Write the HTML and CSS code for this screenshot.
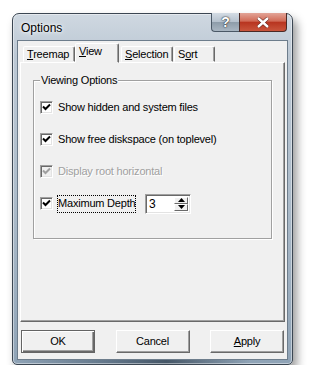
FILE: index.html
```html
<!DOCTYPE html>
<html lang="en">
<head>
  <meta charset="UTF-8" />
  <title>Options</title>
  <link rel="stylesheet" href="styles.css">
</head>
<body>
  <div class="window">
    <div class="titlebar">
      <span class="title">Options</span>
      <div class="caption-btns">
        <div class="cap-help">?</div>
        <div class="cap-close">
          <svg width="14" height="11" viewBox="0 0 14 11">
            <path d="M2 1 L12 10 M12 1 L2 10" stroke="#5a1a12" stroke-width="3.6" fill="none"/>
            <path d="M2 1 L12 10 M12 1 L2 10" stroke="#fff" stroke-width="2.4" fill="none"/>
          </svg>
        </div>
      </div>
    </div>

    <div class="client">
      <div class="tabs">
        <div class="tab tab-treemap"><u>T</u>reemap</div>
        <div class="tab tab-view active"><u>V</u>iew</div>
        <div class="tab tab-selection"><u>S</u>election</div>
        <div class="tab tab-sort">S<u>o</u>rt</div>
      </div>

      <div class="panel">
        <div class="group">
          <span class="legend">Viewing Options</span>
          <div class="rows">
            <div class="row">
              <span class="check"><svg width="9" height="9" viewBox="0 0 9 9"><path d="M1 3.5 L3.5 6 L8 1.5" stroke="#000" stroke-width="2" fill="none"/></svg></span>
              <span class="label">Show hidden and system files</span>
            </div>
            <div class="row">
              <span class="check"><svg width="9" height="9" viewBox="0 0 9 9"><path d="M1 3.5 L3.5 6 L8 1.5" stroke="#000" stroke-width="2" fill="none"/></svg></span>
              <span class="label">Show free diskspace (on toplevel)</span>
            </div>
            <div class="row disabled">
              <span class="check"><svg width="9" height="9" viewBox="0 0 9 9"><path d="M1 3.5 L3.5 6 L8 1.5" stroke="#a0a0a0" stroke-width="2" fill="none"/></svg></span>
              <span class="label">Display root horizontal</span>
            </div>
            <div class="row">
              <span class="check"><svg width="9" height="9" viewBox="0 0 9 9"><path d="M1 3.5 L3.5 6 L8 1.5" stroke="#000" stroke-width="2" fill="none"/></svg></span>
              <span class="label focus">Maximum Depth</span>
              <div class="spin">
                <span class="spin-value">3</span>
                <div class="spin-btns">
                  <div class="spin-up"><svg width="7" height="4" viewBox="0 0 7 4"><path d="M0 4 L3.5 0 L7 4 Z" fill="#000"/></svg></div>
                  <div class="spin-down"><svg width="7" height="4" viewBox="0 0 7 4"><path d="M0 0 L7 0 L3.5 4 Z" fill="#000"/></svg></div>
                </div>
              </div>
            </div>
          </div>
        </div>
      </div>

      <div class="buttons">
        <div class="btn default">OK</div>
        <div class="btn">Cancel</div>
        <div class="btn"><u>A</u>pply</div>
      </div>
    </div>
  </div>
</body>
</html>
```

FILE: styles.css
```css
body {
  margin: 0;
  padding: 0;
  background: #fff;
  font-family: "Liberation Sans", Arial, sans-serif;
  font-size: 11px;
  letter-spacing: -0.2px;
  color: #000;
}
.window {
  margin: 13px 0 0 12px;
  width: 281px;
  height: 352px;
  box-sizing: border-box;
  border: 1px solid #3b4652;
  border-radius: 7px 7px 5px 5px;
  padding: 0 5px 5px 5px;
  background:
    linear-gradient(90deg, rgba(120,145,170,0.0) 0%, rgba(40,60,80,0.45) 35%, rgba(20,35,50,0.6) 55%, rgba(120,145,170,0.0) 85%) bottom / 100% 5px no-repeat,
    linear-gradient(180deg, #cfd8e1 0%, #bcc8d4 12%, #aebdcb 50%, #8fa3b6 100%);
  box-shadow: 4px 6px 10px rgba(0,0,0,0.4), inset 0 0 0 1px rgba(255,255,255,0.45);
}
.titlebar {
  display: flex;
  height: 27px;
}
.title {
  align-self: center;
  margin: 0 0 0 3px;
  font-size: 12px;
  letter-spacing: 0;
  color: #000;
  text-shadow: 0 0 6px #fff, 0 0 3px #fff;
}
.caption-btns {
  display: flex;
  margin-left: auto;
  align-self: flex-start;
  margin-top: -1px;
}
.cap-help {
  width: 28px;
  height: 19px;
  box-sizing: border-box;
  border: 1px solid #4a5866;
  border-top: none;
  border-right: none;
  border-radius: 0 0 0 4px;
  background: linear-gradient(180deg, #d4dce4 0%, #b6c2ce 48%, #8e9daa 52%, #a9b6c2 100%);
  color: #fff;
  font-weight: bold;
  font-size: 14px;
  line-height: 18px;
  text-align: center;
  text-shadow: 0 0 2px #333, 0 0 1px #000;
}
.cap-close {
  width: 48px;
  height: 19px;
  box-sizing: border-box;
  border: 1px solid #4a2a26;
  border-top: none;
  border-radius: 0 0 4px 0;
  background: linear-gradient(180deg, #e2a497 0%, #d16a56 45%, #b83520 52%, #c9553c 100%);
  display: flex;
  align-items: center;
  justify-content: center;
}
.client {
  height: 318px;
  background: #f0f0f0;
  padding: 0 2px;
  box-shadow: 0 0 0 1px #6d7d8c;
}
.tabs {
  display: flex;
  align-items: flex-end;
  height: 21px;
  padding-left: 3px;
  position: relative;
  z-index: 1;
}
.tab {
  height: 16px;
  box-sizing: border-box;
  border: 1px solid;
  border-color: #fff #696969 transparent #fff;
  box-shadow: inset -1px 0 #a0a0a0;
  border-radius: 2px 2px 0 0;
  padding: 1px 0 0 3px;
  line-height: 13px;
  background: #f0f0f0;
  white-space: nowrap;
}
.tab-treemap { width: 52px; }
.tab-view { width: 44px; }
.tab-selection { width: 52px; margin-left: 2px; }
.tab-sort { width: 41px; margin-left: 1px; }
.tab.active {
  height: 20px;
  margin-bottom: -1px;
  padding-top: 1px;
}
.panel {
  height: 260px;
  box-sizing: border-box;
  border: 1px solid;
  border-color: #fff #696969 #696969 #fff;
  box-shadow: inset -1px -1px #a0a0a0;
  padding: 17px 12px 0 12px;
}
.group {
  height: 159px;
  box-sizing: border-box;
  border: 1px solid #a0a0a0;
  box-shadow: inset 1px 1px #fff, 1px 1px #fff;
  padding: 0 6px;
}
.legend {
  display: block;
  width: fit-content;
  margin: -7px 0 0 0;
  padding: 0 1px;
  line-height: 13px;
  background: #f0f0f0;
}
.rows {
  display: flex;
  flex-direction: column;
  gap: 19px;
  margin-top: 14px;
}
.row {
  display: flex;
  align-items: center;
  height: 13px;
}
.check {
  width: 13px;
  height: 13px;
  box-sizing: border-box;
  border: 1px solid;
  border-color: #a0a0a0 #fff #fff #a0a0a0;
  box-shadow: inset 1px 1px #696969, inset -1px -1px #e3e3e3;
  background: #fff;
  display: flex;
  align-items: center;
  justify-content: center;
  flex: none;
}
.label {
  margin-left: 5px;
  white-space: nowrap;
  line-height: 13px;
}
.disabled .label {
  color: #a0a0a0;
  text-shadow: 1px 1px #fff;
}
.disabled .check {
  background: #f0f0f0;
}
.focus {
  margin-left: 4px;
  padding: 1px 0 2px 0;
  width: 77px;
  border: 1px dotted #000;
}
.spin {
  display: flex;
  margin-left: 9px;
  width: 46px;
  height: 20px;
  box-sizing: border-box;
  border: 1px solid;
  border-color: #a0a0a0 #fff #fff #a0a0a0;
  box-shadow: inset 1px 1px #696969, inset -1px -1px #e3e3e3;
  background: #fff;
  padding: 2px;
}
.spin-value {
  flex: 1;
  padding-left: 1px;
  line-height: 14px;
  font-size: 12px;
}
.spin-btns {
  display: flex;
  flex-direction: column;
  width: 14px;
}
.spin-up, .spin-down {
  flex: 1;
  background: #f0f0f0;
  border: 1px solid;
  border-color: #fff #696969 #696969 #fff;
  display: flex;
  align-items: center;
  justify-content: center;
}
.buttons {
  display: flex;
  justify-content: space-between;
  margin-top: 8px;
  padding: 0 1px;
}
.btn {
  width: 74px;
  height: 23px;
  box-sizing: border-box;
  border: 1px solid;
  border-color: #fff #696969 #696969 #fff;
  box-shadow: inset -1px -1px #a0a0a0;
  text-align: center;
  line-height: 20px;
}
.btn.default {
  border-color: #646464;
  box-shadow: inset 1px 1px #fff, inset -1px -1px #696969, inset -2px -2px #a0a0a0;
}
```
